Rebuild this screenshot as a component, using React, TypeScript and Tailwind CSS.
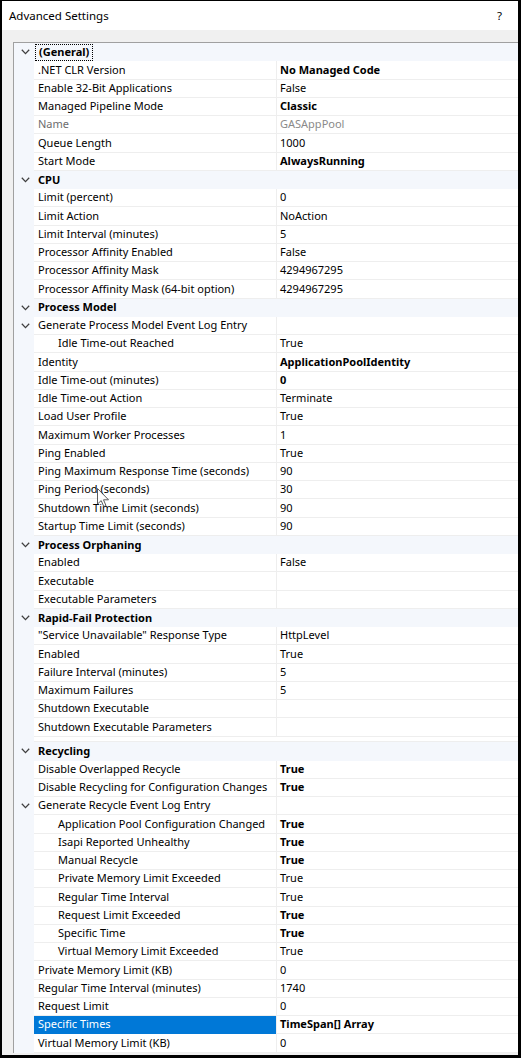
import React from "react"

type Row =
  | { kind: "cat"; label: string; focus?: boolean }
  | {
      kind: "item"
      label: string
      value?: string
      bold?: boolean
      indent?: boolean
      expand?: boolean
      muted?: boolean
      selected?: boolean
    }
  | { kind: "gap" }

const rows: Row[] = [
  { kind: "cat", label: "(General)", focus: true },
  { kind: "item", label: ".NET CLR Version", value: "No Managed Code", bold: true },
  { kind: "item", label: "Enable 32-Bit Applications", value: "False" },
  { kind: "item", label: "Managed Pipeline Mode", value: "Classic", bold: true },
  { kind: "item", label: "Name", value: "GASAppPool", muted: true },
  { kind: "item", label: "Queue Length", value: "1000" },
  { kind: "item", label: "Start Mode", value: "AlwaysRunning", bold: true },
  { kind: "cat", label: "CPU" },
  { kind: "item", label: "Limit (percent)", value: "0" },
  { kind: "item", label: "Limit Action", value: "NoAction" },
  { kind: "item", label: "Limit Interval (minutes)", value: "5" },
  { kind: "item", label: "Processor Affinity Enabled", value: "False" },
  { kind: "item", label: "Processor Affinity Mask", value: "4294967295" },
  { kind: "item", label: "Processor Affinity Mask (64-bit option)", value: "4294967295" },
  { kind: "cat", label: "Process Model" },
  { kind: "item", label: "Generate Process Model Event Log Entry", expand: true },
  { kind: "item", label: "Idle Time-out Reached", value: "True", indent: true },
  { kind: "item", label: "Identity", value: "ApplicationPoolIdentity", bold: true },
  { kind: "item", label: "Idle Time-out (minutes)", value: "0", bold: true },
  { kind: "item", label: "Idle Time-out Action", value: "Terminate" },
  { kind: "item", label: "Load User Profile", value: "True" },
  { kind: "item", label: "Maximum Worker Processes", value: "1" },
  { kind: "item", label: "Ping Enabled", value: "True" },
  { kind: "item", label: "Ping Maximum Response Time (seconds)", value: "90" },
  { kind: "item", label: "Ping Period (seconds)", value: "30" },
  { kind: "item", label: "Shutdown Time Limit (seconds)", value: "90" },
  { kind: "item", label: "Startup Time Limit (seconds)", value: "90" },
  { kind: "cat", label: "Process Orphaning" },
  { kind: "item", label: "Enabled", value: "False" },
  { kind: "item", label: "Executable", value: "" },
  { kind: "item", label: "Executable Parameters", value: "" },
  { kind: "cat", label: "Rapid-Fail Protection" },
  { kind: "item", label: "\"Service Unavailable\" Response Type", value: "HttpLevel" },
  { kind: "item", label: "Enabled", value: "True" },
  { kind: "item", label: "Failure Interval (minutes)", value: "5" },
  { kind: "item", label: "Maximum Failures", value: "5" },
  { kind: "item", label: "Shutdown Executable", value: "" },
  { kind: "item", label: "Shutdown Executable Parameters", value: "" },
  { kind: "gap" },
  { kind: "cat", label: "Recycling" },
  { kind: "item", label: "Disable Overlapped Recycle", value: "True", bold: true },
  { kind: "item", label: "Disable Recycling for Configuration Changes", value: "True", bold: true },
  { kind: "item", label: "Generate Recycle Event Log Entry", expand: true },
  { kind: "item", label: "Application Pool Configuration Changed", value: "True", bold: true, indent: true },
  { kind: "item", label: "Isapi Reported Unhealthy", value: "True", bold: true, indent: true },
  { kind: "item", label: "Manual Recycle", value: "True", bold: true, indent: true },
  { kind: "item", label: "Private Memory Limit Exceeded", value: "True", indent: true },
  { kind: "item", label: "Regular Time Interval", value: "True", indent: true },
  { kind: "item", label: "Request Limit Exceeded", value: "True", bold: true, indent: true },
  { kind: "item", label: "Specific Time", value: "True", bold: true, indent: true },
  { kind: "item", label: "Virtual Memory Limit Exceeded", value: "True", indent: true },
  { kind: "item", label: "Private Memory Limit (KB)", value: "0" },
  { kind: "item", label: "Regular Time Interval (minutes)", value: "1740" },
  { kind: "item", label: "Request Limit", value: "0" },
  { kind: "item", label: "Specific Times", value: "TimeSpan[] Array", bold: true, selected: true },
  { kind: "item", label: "Virtual Memory Limit (KB)", value: "0" },
]

function Chevron() {
  return (
    <svg width="9" height="6" viewBox="0 0 9 6" className="block">
      <path d="M0.8 0.8 L4.5 4.6 L8.2 0.8" fill="none" stroke="#404040" strokeWidth="1.3" />
    </svg>
  )
}

function Cursor() {
  return (
    <svg
      width="13"
      height="20"
      viewBox="0 0 13 20"
      className="absolute left-[95px] top-[487px] opacity-80"
    >
      <path
        d="M0.5 0.5 L0.5 16 L4.2 12.6 L6.8 18.6 L9 17.6 L6.5 11.8 L11.5 11.8 Z"
        fill="#ffffff"
        stroke="#333333"
        strokeWidth="1"
      />
    </svg>
  )
}

export default function App() {
  return (
    <div
      className="relative w-[521px] h-[1058px] border-t border-l-2 border-r-[3px] border-b-[3px] border-black bg-[#f0f0f0] text-[11px] text-black flex flex-col overflow-hidden"
      style={{ fontFamily: "'Noto Sans', 'Open Sans', sans-serif" }}
    >
      <div className="h-[29px] bg-white flex items-center justify-between pl-[7px] pr-[16px] text-[11.5px] shrink-0">
        <span>Advanced Settings</span>
        <span>?</span>
      </div>
      <div className="flex-1 pl-[11px] pt-[12px] overflow-hidden">
        <div className="border-t border-l border-[#a0a0a0] bg-white">
          {rows.map((r, i) => {
            if (r.kind === "gap") {
              return (
                <div key={i} className="h-[5.75px] flex">
                  <div className="w-[20px] bg-[#f4f7fc]" />
                  <div className="flex-1 bg-white border-b border-[#eeeeee]" />
                </div>
              )
            }
            if (r.kind === "cat") {
              return (
                <div key={i} className="h-[18.25px] flex items-center bg-[#f4f7fc] font-bold">
                  <div className="w-[20px] flex justify-center pl-[2px]">
                    <Chevron />
                  </div>
                  <div
                    className={
                      r.focus
                        ? "ml-[1px] h-[17px] px-[3px] flex items-center border border-dotted border-black"
                        : "pl-[4px]"
                    }
                  >
                    {r.label}
                  </div>
                </div>
              )
            }
            return (
              <div key={i} className="h-[18.25px] flex">
                <div className="w-[20px] bg-[#f4f7fc] flex items-center justify-center pl-[2px]">
                  {r.expand && <Chevron />}
                </div>
                <div
                  className={
                    "w-[242px] flex items-center border-b whitespace-nowrap overflow-hidden " +
                    (r.selected
                      ? "bg-[#0078d7] text-white border-[#0078d7] "
                      : "border-[#eeeeee] ") +
                    (r.indent ? "pl-[24px] " : "pl-[4px] ") +
                    (r.muted ? "text-[#6d6d6d]" : "")
                  }
                >
                  {r.label}
                </div>
                <div
                  className={
                    "flex-1 flex items-center pl-[3px] border-b border-l border-[#eeeeee] whitespace-nowrap " +
                    (r.bold ? "font-bold " : "") +
                    (r.muted ? "text-[#8a8a8a]" : "")
                  }
                >
                  {r.value}
                </div>
              </div>
            )
          })}
        </div>
      </div>
      <Cursor />
    </div>
  )
}
